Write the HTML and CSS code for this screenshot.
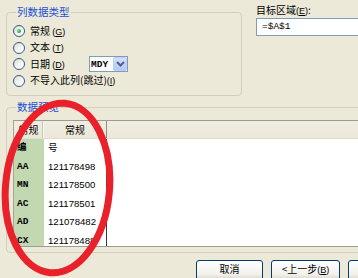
FILE: index.html
```html
<!DOCTYPE html>
<html lang="zh">
<head>
<meta charset="utf-8">
<link rel="stylesheet" href="styles.css">
</head>
<body>
<div class="page">
  <div class="top">
    <div class="group g1">
      <div class="gtitle">列数据类型</div>
      <div class="radios">
        <div class="row"><span class="radio on"></span><span class="lbl">常规 <span class="key">(<u>G</u>)</span></span></div>
        <div class="row"><span class="radio"></span><span class="lbl">文本 <span class="key">(<u>T</u>)</span></span></div>
        <div class="row"><span class="radio"></span><span class="lbl date">日期 <span class="key">(<u>D</u>)</span></span>
          <div class="combo"><span class="cv">MDY</span><span class="cbtn"><svg width="9" height="6" viewBox="0 0 9 6"><path d="M1 1 L4.5 4.5 L8 1" fill="none" stroke="#4D6185" stroke-width="2"/></svg></span></div>
        </div>
        <div class="row"><span class="radio"></span><span class="lbl">不导入此列(跳过)<span class="key">(<u>I</u>)</span></span></div>
      </div>
    </div>
    <div class="target">
      <div class="tlabel">目标区域<span class="key">(<u>E</u>)</span>:</div>
      <div class="tinput">=$A$1</div>
    </div>
  </div>

  <div class="group g2">
    <div class="gtitle">数据预览</div>
    <div class="preview">
      <div class="thead">
        <div class="h1">常规</div>
        <div class="h2">常规</div>
        <div class="h3"></div>
      </div>
      <div class="tbody">
        <div class="c1">编</div><div class="c2">号</div><div class="c3"></div>
        <div class="c1">AA</div><div class="c2">121178498</div><div class="c3"></div>
        <div class="c1">MN</div><div class="c2">121178500</div><div class="c3"></div>
        <div class="c1">AC</div><div class="c2">121178501</div><div class="c3"></div>
        <div class="c1">AD</div><div class="c2">121078482</div><div class="c3"></div>
        <div class="c1">CX</div><div class="c2">121178488</div><div class="c3"></div>
      </div>
    </div>
  </div>

  <div class="buttons">
    <div class="btn b1">取消</div>
    <div class="btn b2">&lt;上一步<span class="key">(<u>B</u>)</span></div>
    <div class="btn b3">下一步<span class="key">(<u>N</u>)</span>&gt;</div>
  </div>

  <svg class="mark" width="358" height="278" viewBox="0 0 358 278">
    <ellipse cx="57.5" cy="188" rx="52" ry="85" transform="rotate(5 57.5 188)" fill="none" stroke="#E8212A" stroke-width="7"/>
  </svg>
</div>
</body>
</html>
```

FILE: styles.css
```css
html, body {
  margin: 0;
  padding: 0;
}
body {
  background: #ECE9D8;
}
.page {
  position: relative;
  width: 358px;
  height: 278px;
  overflow: hidden;
  background: #ECE9D8;
  font-family: "Noto Sans CJK SC", "Liberation Sans", sans-serif;
  font-size: 10px;
  color: #000;
}
.key {
  font-family: "Liberation Sans", sans-serif;
  font-size: 9px;
}
.top {
  display: flex;
  height: 96px;
}
.group {
  border: 1px solid #D0D0BF;
  border-radius: 4px;
  box-sizing: border-box;
}
.g1 {
  margin: 12px 0 0 6px;
  width: 236px;
  height: 84px;
  flex: none;
  padding-left: 6px;
}
.gtitle {
  margin: -8px 0 0 3px;
  width: fit-content;
  padding: 0 1px;
  line-height: 14px;
  height: 14px;
  font-size: 10.5px;
  background: #ECE9D8;
  color: #1C4FD6;
}
.radios {
  margin-top: 4px;
}
.row {
  display: flex;
  align-items: center;
  height: 16.5px;
}
.radio {
  width: 12px;
  height: 12px;
  box-sizing: border-box;
  border: 1px solid #2E5C8A;
  border-radius: 50%;
  background: linear-gradient(135deg, #DCDCD4, #FFFFFF 80%);
  display: flex;
  align-items: center;
  justify-content: center;
  flex: none;
}
.radio.on::after {
  content: "";
  width: 4px;
  height: 4px;
  border-radius: 50%;
  background: radial-gradient(circle at 35% 35%, #8FE38F, #21A121 70%);
}
.lbl {
  margin-left: 5px;
  line-height: 14px;
  white-space: nowrap;
}
.lbl.date {
  width: 59px;
}
.combo {
  width: 39px;
  height: 16px;
  box-sizing: border-box;
  border: 1px solid #7F9DB9;
  background: #fff;
  display: flex;
  align-items: center;
  justify-content: space-between;
  padding: 0 0 0 1px;
}
.cv {
  font-family: "Liberation Mono", monospace;
  font-weight: bold;
  font-size: 9.5px;
}
.cbtn {
  width: 14px;
  height: 14px;
  box-sizing: border-box;
  border-radius: 2px;
  background: linear-gradient(#D3E0FD, #B5C9F7);
  border: 1px solid #BCCDF5;
  display: flex;
  align-items: center;
  justify-content: center;
}
.target {
  margin-left: 14px;
  margin-right: -20px;
  flex: 1;
}
.tlabel {
  padding-top: 3px;
  line-height: 14px;
  height: 14px;
  white-space: nowrap;
}
.tinput {
  margin-top: 1px;
  height: 18px;
  box-sizing: border-box;
  border: 1px solid #7F9DB9;
  background: #fff;
  padding-left: 5px;
  line-height: 16px;
  font-family: "Liberation Mono", monospace;
  font-size: 9.5px;
}
.g2 {
  margin: 11px 0 0 6px;
  width: 380px;
  padding: 0 0 5px 6px;
}
.preview {
  margin-top: 6px;
  border-top: 1px solid #9C9B94;
  border-left: 1px solid #A5A49C;
  border-bottom: 1px solid #9C9B94;
  background: #fff;
}
.thead {
  display: grid;
  grid-template-columns: 30px 63px 1fr;
  height: 18px;
  background: linear-gradient(#EFEDE2, #EBE8D9);
  border-bottom: 1px solid #E2DECD;
  box-sizing: border-box;
}
.thead > div {
  line-height: 17px;
  text-align: center;
  box-sizing: border-box;
}
.h1 {
  border-right: 1px solid #F8F7F2;
  box-shadow: inset -1px 0 0 #C9C6B5;
}
.h2 {
  border-right: 1px solid #8E8D85;
}
.tbody {
  display: grid;
  grid-template-columns: 30px 63px 1fr;
  grid-auto-rows: 18.5px;
  height: 107px;
  overflow: hidden;
}
.tbody > div {
  line-height: 18.5px;
  box-sizing: border-box;
}
.c1 {
  background: #C2D8B1;
  padding-left: 3px;
  font-family: "Liberation Mono", "Noto Sans CJK SC", monospace;
  font-weight: bold;
  font-size: 9.5px;
}
.c2 {
  padding-left: 4px;
  border-right: 1px solid #3A3A3A;
  font-family: "Liberation Sans", "Noto Sans CJK SC", sans-serif;
  font-size: 9.6px;
}
.buttons {
  display: flex;
  gap: 8px;
  margin-top: 7px;
  padding-left: 196px;
}
.btn {
  flex: none;
  height: 21px;
  box-sizing: border-box;
  border: 1px solid #003C74;
  border-radius: 3px;
  background: linear-gradient(#FFFFFF, #F2F1EC 70%, #D8D3C6);
  text-align: center;
  line-height: 16px;
  white-space: nowrap;
}
.b1 { width: 67px; }
.b2 { width: 69px; }
.b3 { width: 70px; }
.mark {
  position: absolute;
  left: 0;
  top: 0;
  pointer-events: none;
}
```
